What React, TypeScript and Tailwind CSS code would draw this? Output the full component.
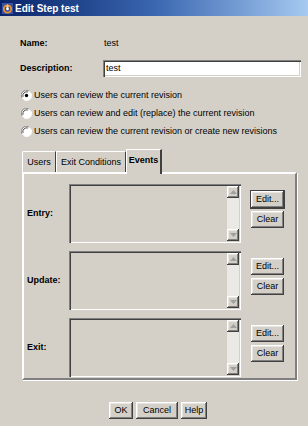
import React from 'react';

const raised =
  'bg-[#d4d0c8] shadow-[inset_-1px_-1px_0_#404040,inset_1px_1px_0_#ffffff,inset_-2px_-2px_0_#808080,inset_2px_2px_0_#e8e6e2]';
const sunken =
  'shadow-[inset_1px_1px_0_#808080,inset_2px_2px_0_#404040,inset_-1px_-1px_0_#ffffff,inset_-2px_-2px_0_#d4d0c8]';

function Btn({ label, w, focus }: { label: string; w: string; focus?: boolean }) {
  return (
    <div
      className={`${w} h-[17px] flex items-center justify-center ${raised} ${
        focus ? 'outline outline-1 outline-[#404040]' : ''
      }`}
    >
      <span className="leading-none">{label}</span>
    </div>
  );
}

function Radio({ label, checked }: { label: string; checked?: boolean }) {
  return (
    <div className="h-[18px] flex items-center">
      <svg width="11" height="11" viewBox="0 0 12 12" className="ml-[1px] mr-[2px]">
        <circle cx="6" cy="6" r="5.5" fill="#ffffff" />
        <path d="M1 8.5 A5.5 5.5 0 0 1 8.5 1" fill="none" stroke="#808080" strokeWidth="1" />
        <path d="M2.2 7.5 A4.2 4.2 0 0 1 7.5 2.2" fill="none" stroke="#404040" strokeWidth="1" />
        <path d="M3.5 11 A5.5 5.5 0 0 0 11 3.5" fill="none" stroke="#ffffff" strokeWidth="1" />
        {checked && <circle cx="6" cy="6" r="1.8" fill="#000000" />}
      </svg>
      <span>{label}</span>
    </div>
  );
}

function Arrow({ up }: { up?: boolean }) {
  return (
    <div className={`w-[12px] h-[12px] flex items-center justify-center ${raised}`}>
      <svg width="7" height="4" viewBox="0 0 7 4">
        {up ? (
          <path d="M0 4 L3.5 0 L7 4 Z" fill="#a0a0a0" />
        ) : (
          <path d="M0 0 L3.5 4 L7 0 Z" fill="#a0a0a0" />
        )}
      </svg>
    </div>
  );
}

function Area({ h }: { h: string }) {
  return (
    <div className={`w-[172px] ${h} ${sunken} p-[2px] flex justify-end bg-[#d4d0c8]`}>
      <div className="w-[12px] h-full bg-[#ebe9e5] flex flex-col justify-between">
        <Arrow up />
        <Arrow />
      </div>
    </div>
  );
}

function EventRow({ label, h, focus }: { label: string; h: string; focus?: boolean }) {
  return (
    <div className="flex items-start">
      <div className={`w-[42px] ${h} flex items-center font-bold`}>{label}</div>
      <Area h={h} />
      <div className="ml-[10px] mt-[7px] flex flex-col gap-[3px]">
        <Btn label="Edit..." w="w-[33px]" focus={focus} />
        <Btn label="Clear" w="w-[33px]" />
      </div>
    </div>
  );
}

export default function App() {
  return (
    <div className="w-[308px] h-[426px] overflow-hidden bg-[#d4d0c8] text-black text-[9px] leading-[11px] font-['Liberation_Sans',Arial,sans-serif]">
      <div className="h-[16px] flex items-center pl-[2px] bg-gradient-to-r from-[#0a246a] via-[#3a66b0] to-[#a6caf0]">
        <svg width="11" height="11" viewBox="0 0 12 12" className="mr-[2px]">
          <rect width="12" height="12" fill="#3a4fa8" />
          <circle cx="6" cy="6.5" r="4" fill="none" stroke="#e8902a" strokeWidth="2" />
          <path d="M6 1 L7.5 4 L6 6 L4.5 4 Z" fill="#f8d060" />
          <circle cx="6" cy="6.5" r="1.5" fill="#ffffff" />
        </svg>
        <span className="text-white font-bold text-[10px]">Edit Step test</span>
      </div>

      <div className="pl-[20px]">
        <div className="mt-[19px] h-[17px] flex items-center">
          <span className="w-[84px] font-bold">Name:</span>
          <span>test</span>
        </div>
        <div className="mt-[8px] h-[17px] flex items-center">
          <span className="w-[83px] font-bold">Description:</span>
          <div className={`w-[198px] h-[17px] bg-white ${sunken} flex items-center pl-[3px]`}>test</div>
        </div>

        <div className="mt-[9px] flex flex-col">
          <Radio label="Users can review the current revision" checked />
          <Radio label="Users can review and edit (replace) the current revision" />
          <Radio label="Users can review the current revision or create new revisions" />
        </div>

        <div className="mt-[9px] ml-[2px] w-[275px]">
          <div className="h-[23px] flex items-end">
            <div className="w-[34px] h-[21px] flex items-center justify-center border-t border-l border-white border-r border-r-[#404040] rounded-tl-[2px]">
              Users
            </div>
            <div className="w-[70px] h-[21px] flex items-center justify-center border-t border-l border-white border-r border-r-[#404040]">
              Exit Conditions
            </div>
            <div className="relative z-10 -mb-[2px] w-[36px] h-[25px] pb-[3px] flex items-center justify-center font-bold bg-[#d4d0c8] border-t border-l border-white border-r-2 border-r-[#404040]">
              Events
            </div>
          </div>
          <div className="h-[208px] border-2 border-t-white border-l-white border-b-[#808080] border-r-[#808080] shadow-[1px_1px_0_#ffffff] pl-[3px] pt-[10px] flex flex-col gap-[8px]">
            <EventRow label="Entry:" h="h-[59px]" focus />
            <EventRow label="Update:" h="h-[59px]" />
            <EventRow label="Exit:" h="h-[59px]" />
          </div>
        </div>
      </div>

      <div className="mt-[22px] pl-[109px] flex gap-[3px]">
        <Btn label="OK" w="w-[24px]" />
        <Btn label="Cancel" w="w-[42px]" />
        <Btn label="Help" w="w-[26px]" />
      </div>
    </div>
  );
}
